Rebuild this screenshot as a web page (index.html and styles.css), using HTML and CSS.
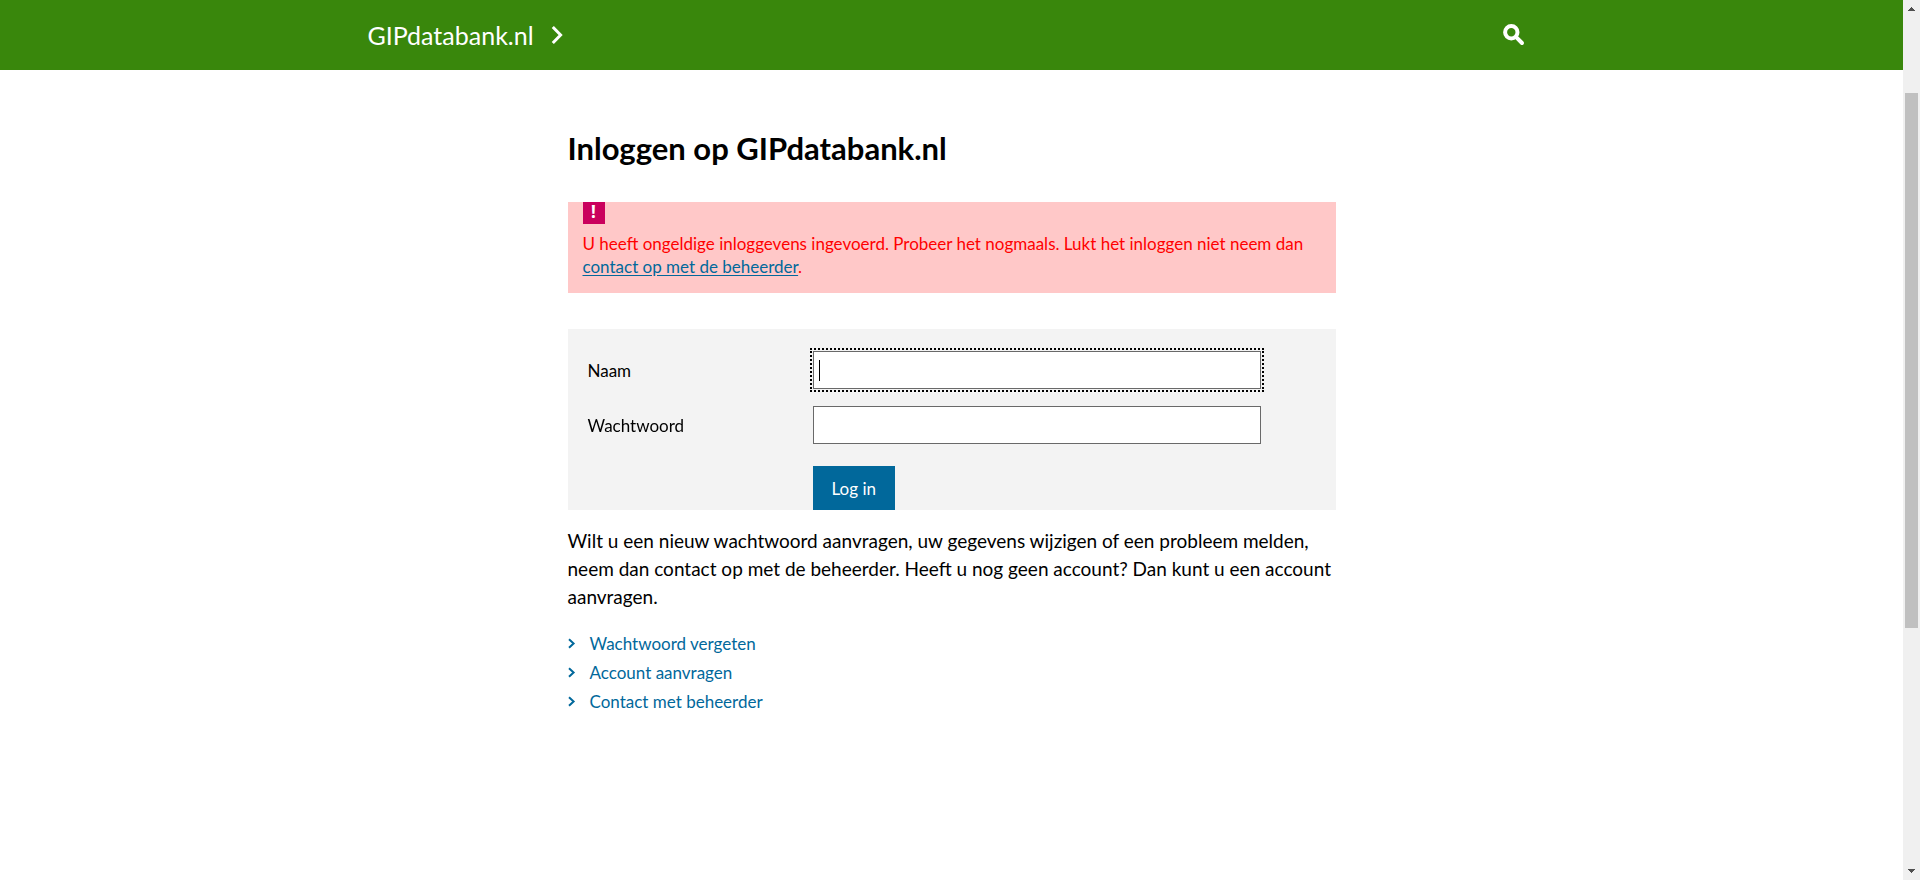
FILE: index.html
```html
<!DOCTYPE html>
<html lang="nl">
<head>
<meta charset="utf-8">
<meta name="viewport" content="width=device-width, initial-scale=1">
<title>Inloggen op GIPdatabank.nl</title>
<link rel="stylesheet" href="styles.css">
</head>
<body>
<div class="window">
  <div class="page">
    <header class="header">
      <div class="header-inner">
        <a class="brand" href="#">GIPdatabank.nl
          <svg class="brand-arrow" viewBox="0 0 12 20" aria-hidden="true"><path d="M1.8 2 9.6 10 1.8 18"/></svg>
        </a>
        <button class="search" type="button" aria-label="Zoeken">
          <svg class="search-icon" viewBox="0 0 22 22" aria-hidden="true"><circle cx="8.3" cy="8.2" r="6.2"/><path d="M13.4 13.4 19 19"/></svg>
        </button>
      </div>
    </header>
    <main class="content">
      <h1 class="title">Inloggen op GIPdatabank.nl</h1>
      <div class="alert" role="alert">
        <span class="alert-mark">!</span>
        <p class="alert-text">U heeft ongeldige inloggevens ingevoerd. Probeer het nogmaals. Lukt het inloggen niet neem dan <a class="alert-link" href="#">contact op met de beheerder</a>.</p>
      </div>
      <form class="login">
        <label class="label" for="naam">Naam</label>
        <input class="field field-active" id="naam" type="text" autofocus>
        <label class="label" for="wachtwoord">Wachtwoord</label>
        <input class="field" id="wachtwoord" type="password">
        <button class="submit" type="submit">Log in</button>
      </form>
      <p class="intro">Wilt u een nieuw wachtwoord aanvragen, uw gegevens wijzigen of een probleem melden, neem dan contact op met de beheerder. Heeft u nog geen account? Dan kunt u een account aanvragen.</p>
      <ul class="links">
        <li><a class="link" href="#"><svg class="link-arrow" viewBox="0 0 8 11" aria-hidden="true"><path d="M1 1.2 5.6 5.5 1 9.8"/></svg>Wachtwoord vergeten</a></li>
        <li><a class="link" href="#"><svg class="link-arrow" viewBox="0 0 8 11" aria-hidden="true"><path d="M1 1.2 5.6 5.5 1 9.8"/></svg>Account aanvragen</a></li>
        <li><a class="link" href="#"><svg class="link-arrow" viewBox="0 0 8 11" aria-hidden="true"><path d="M1 1.2 5.6 5.5 1 9.8"/></svg>Contact met beheerder</a></li>
      </ul>
    </main>
  </div>
  <div class="scrollbar" aria-hidden="true">
    <svg class="scroll-arrow" viewBox="0 0 7 4"><path d="M0 4V3H1V2H2V1H3V0H4V1H5V2H6V3H7V4Z"/></svg>
    <div class="scroll-track"><div class="scroll-thumb"></div></div>
    <svg class="scroll-arrow" viewBox="0 0 7 4"><path d="M0 0V1H1V2H2V3H3V4H4V3H5V2H6V1H7V0Z"/></svg>
  </div>
</div>
</body>
</html>
```
FILE: styles.css
```css
* { box-sizing: border-box; }

body {
  margin: 0;
  background: #fff;
  color: #000;
  font-family: Lato, "Noto Sans", sans-serif;
  font-size: 17px;
  line-height: 23px;
}

h1, p, ul { margin: 0; padding: 0; }

.window { display: flex; height: 100vh; }
.page { flex: 1; min-width: 0; overflow: hidden; }

.header { background: #39870c; }
.header-inner {
  display: flex;
  align-items: center;
  justify-content: space-between;
  max-width: 1200px;
  min-height: 70px;
  margin: 0 auto;
  padding: 0 16px;
}
.brand {
  display: flex;
  align-items: center;
  gap: 17px;
  color: #fff;
  font-size: 25px;
  line-height: 32px;
  text-decoration: none;
}
.brand-arrow { width: 12px; height: 20px; fill: none; stroke: #fff; stroke-width: 3; }
.search { display: flex; padding: 0 11px; border: 0; background: none; }
.search-icon { width: 22px; height: 22px; fill: none; stroke: #fff; stroke-width: 4; stroke-linecap: round; }

.content { max-width: 768px; margin: 0 auto; padding-top: 58px; }
.title { font-size: 31px; line-height: 40px; font-weight: 700; }

.alert { margin-top: 34px; padding: 0 15px 15px; background: #ffc8c8; color: #f00; }
.alert-mark {
  display: block;
  width: 22px;
  height: 22px;
  margin-bottom: 8px;
  background: #ca005d;
  color: #fff;
  font-family: "Noto Sans", sans-serif;
  font-weight: 700;
  line-height: 20px;
  text-align: center;
}
.alert-link { color: #01689b; text-underline-offset: 2px; }

.login {
  display: grid;
  grid-template-columns: 225px minmax(0, 448px);
  row-gap: 17px;
  align-items: center;
  margin-top: 36px;
  padding: 22px 20px 0;
  background: #f3f3f3;
}
.field {
  width: 100%;
  height: 38px;
  padding: 0 5px;
  border: 1px solid #696969;
  border-radius: 0;
  background: #fff;
  font: inherit;
}
.field:focus { outline: none; }
.field-active, .field-active:focus {
  outline: 2px dotted #000;
  outline-offset: 1px;
  caret-color: transparent;
  background: linear-gradient(#000, #000) 5px center / 1px 21px no-repeat #fff;
}
.submit {
  grid-column: 2;
  justify-self: start;
  height: 44px;
  margin-top: 5px;
  padding: 0 19px;
  border: 0;
  background: #01689b;
  color: #fff;
  font: inherit;
}

.intro { margin-top: 17px; font-size: 19px; line-height: 28px; }

.links { margin-top: 18px; list-style: none; line-height: 29px; }
.link { display: flex; align-items: center; gap: 14px; width: fit-content; color: #01689b; text-decoration: none; }
.link-arrow { width: 8px; height: 11px; fill: none; stroke: #01689b; stroke-width: 2; }

.scrollbar {
  display: flex;
  flex-direction: column;
  align-items: center;
  flex: 0 0 17px;
  padding: 7px 0;
  background: #f0f0f0;
}
.scroll-arrow { width: 7px; height: 4px; fill: #505050; }
.scroll-track { flex: 1; width: 13px; padding-top: 82px; }
.scroll-thumb { height: 69%; background: #c0c0c0; }
```
